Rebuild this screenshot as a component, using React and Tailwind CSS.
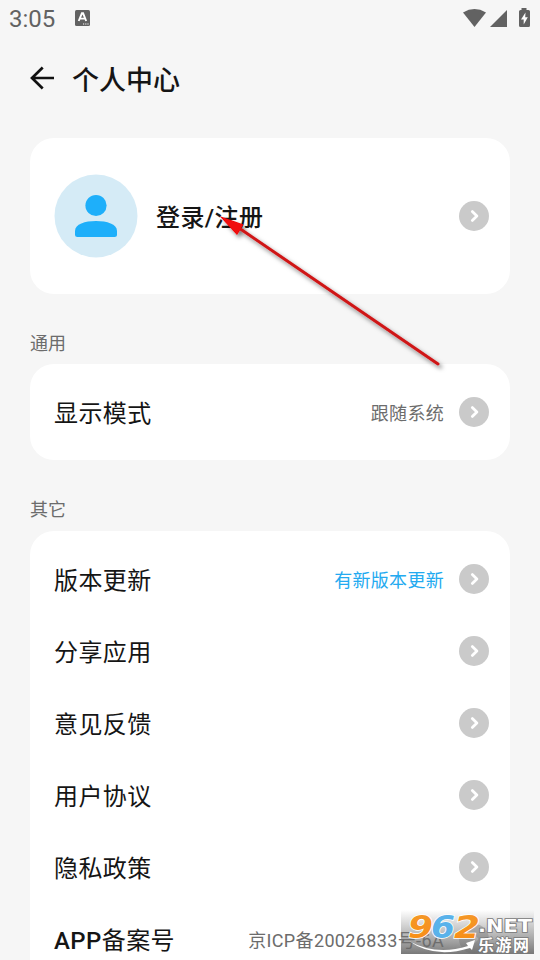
import React from "react";

function Chevron() {
  return (
    <svg className="size-[30px] shrink-0" viewBox="0 0 30 30">
      <circle cx="15" cy="15" r="15" fill="#cacaca" />
      <path d="M13.3 10.6L17.9 15L13.3 19.4" fill="none" stroke="#fff" strokeWidth="2.8" strokeLinecap="round" strokeLinejoin="round" />
    </svg>
  );
}

function Row({ label, value, accent, filing }) {
  return (
    <div className="flex h-[72px] items-center justify-between pl-6 pr-[21px]">
      <span className="pt-1 text-[24px] leading-9 tracking-[0.4px] text-[#151515]">
        {filing ? <><span className="font-medium">APP</span>{label.slice(3)}</> : label}
      </span>
      <div className="flex items-center gap-[15px]">
        {value && (
          <span className={"whitespace-nowrap pt-1 text-[18px] leading-7 " + (filing ? "tracking-[0.36px] " : "tracking-[0.3px] ") + (accent ? "text-[#23aaf0]" : "text-[#6c6c6c]")}>{value}</span>
        )}
        <Chevron />
      </div>
    </div>
  );
}

function StatusBar() {
  return (
    <header className="flex h-9 shrink-0 items-center justify-between px-[9px] text-[#626262]">
      <div className="flex items-center gap-5">
        <span className="pt-[2px] text-[24px] leading-8">3:05</span>
        <svg className="h-4 w-[15px]" viewBox="0 0 15 16">
          <rect width="15" height="16" rx="1.5" fill="#626262" />
          <path d="M3.7 11L6.9 3.3H8.1L11.2 11M5.2 8.6H9.7" fill="none" stroke="#fff" strokeWidth="1.9" />
          <path d="M8 14h1.2M10.2 14h1.2M12.4 14h1.2" stroke="#fff" strokeWidth="1.2" />
        </svg>
      </div>
      <svg className="h-5 w-[68px]" viewBox="463 8 68 20">
        <path d="M463 12.4Q474.5 5.6 486 12.4L474.5 27Z" fill="#626262" />
        <path d="M507 10V27H490Z" fill="#626262" />
        <path d="M521.5 8h5v2h2q1.5 0 1.5 1.5v14q0 1.5-1.5 1.5h-8q-1.5 0-1.5-1.5v-14q0-1.5 1.5-1.5h1z" fill="#626262" />
        <path d="M525.5 12.5L521 19.5H523.7V24.5L527.8 17.2H525.2Z" fill="#fff" />
      </svg>
    </header>
  );
}

function PointerArrow() {
  return (
    <svg className="pointer-events-none absolute left-0 top-0 h-[400px] w-[540px]" viewBox="0 0 540 400">
      <defs>
        <filter id="arrowShadow" x="-10%" y="-10%" width="125%" height="125%">
          <feDropShadow dx="2.5" dy="3" stdDeviation="2.2" floodColor="#000" floodOpacity="0.5" />
        </filter>
      </defs>
      <g filter="url(#arrowShadow)">
        <path d="M239 228L438 364" stroke="#cf1518" strokeWidth="3" strokeLinecap="round" />
        <path d="M219.5 216L243.5 224.5L237 235Z" fill="#f00707" />
      </g>
    </svg>
  );
}

function Watermark() {
  return (
    <svg className="absolute left-[400px] top-[905px] h-[55px] w-[140px]" viewBox="0 0 140 55">
      <defs>
        <linearGradient id="plate" x1="0" y1="0" x2="0" y2="1">
          <stop offset="0" stopColor="#777" stopOpacity="0" />
          <stop offset=".45" stopColor="#777" stopOpacity=".42" />
          <stop offset="1" stopColor="#666" stopOpacity=".88" />
        </linearGradient>
        <linearGradient id="orange" x1="0" y1="0" x2="0" y2="1">
          <stop offset="0" stopColor="#f39a2c" />
          <stop offset="1" stopColor="#f98c13" />
        </linearGradient>
      </defs>
      <rect x="1" y="5" width="133" height="44" fill="url(#plate)" />
      <path d="M9 36Q36 51 68 41L66 38L75 35L72 45L70 43Q34 54 9 36Z" fill="#fff" />
      <g fontFamily="DejaVu Sans" fontWeight="700" fontStyle="italic" fontSize="32" stroke="#fff" strokeWidth="1.6" paintOrder="stroke">
        <text x="8" y="32.5" textLength="25" lengthAdjust="spacingAndGlyphs" fill="url(#orange)">9</text>
        <text x="31" y="32.5" textLength="24" lengthAdjust="spacingAndGlyphs" fill="#59b2ea">6</text>
        <text x="54" y="32.5" textLength="26" lengthAdjust="spacingAndGlyphs" fill="url(#orange)">2</text>
      </g>
      <text x="78" y="27" textLength="54" lengthAdjust="spacingAndGlyphs" fontFamily="DejaVu Sans" fontWeight="700" fontSize="18" fill="#fff" stroke="#777" strokeWidth="1.6" paintOrder="stroke">.NET</text>
      <text x="78" y="45.5" textLength="51" fontFamily="Noto Sans CJK SC" fontWeight="700" fontSize="16" fill="#fff" stroke="#777" strokeWidth="1.5" paintOrder="stroke">乐游网</text>
    </svg>
  );
}

const links = ["分享应用", "意见反馈", "用户协议", "隐私政策"];

export default function App() {
  return (
    <div className="relative flex h-[960px] w-[540px] flex-col overflow-hidden bg-[#f6f6f6] font-['Roboto','Noto_Sans_CJK_SC',sans-serif] text-[#151515]">
      <StatusBar />
      <nav className="flex h-[102px] shrink-0 items-start gap-[18px] pl-[30px] pt-6">
        <svg className="mt-[6px] h-6 w-6" viewBox="0 0 24 24" fill="none" stroke="#111" strokeWidth="2.7">
          <path d="M12.7 1.5L2 12L12.7 22.5M2 12H24" />
        </svg>
        <h1 className="pt-px text-[27px] font-medium leading-10">个人中心</h1>
      </nav>
      <main className="px-[30px]">
        <section className="flex h-[156px] items-center rounded-[24px] bg-white pl-6 pr-[21px]">
          <svg className="size-[84px] shrink-0" viewBox="0 0 84 84">
            <circle cx="42" cy="42" r="41.5" fill="#d5ebf6" />
            <circle cx="42" cy="31.5" r="10.6" fill="#1eaffa" />
            <path d="M21 57C21 50 31 47 42 47S63 50 63 57V60.5Q63 63 60.5 63H23.5Q21 63 21 60.5Z" fill="#1eaffa" />
          </svg>
          <span className="ml-[18px] flex-1 pt-[3px] text-[24px] font-medium leading-9 tracking-[0.4px]">登录/注册</span>
          <Chevron />
        </section>
        <h2 className="mt-[36px] h-[34px] text-[18px] leading-7 text-[#6c6c6c]">通用</h2>
        <section className="rounded-[24px] bg-white py-3">
          <Row label="显示模式" value="跟随系统" />
        </section>
        <h2 className="mt-[36px] h-[35px] text-[18px] leading-7 text-[#6c6c6c]">其它</h2>
        <section className="rounded-t-[24px] bg-white py-3">
          <Row label="版本更新" value="有新版本更新" accent />
          {links.map((label) => <Row key={label} label={label} />)}
          <Row label="APP备案号" value="京ICP备20026833号-6A" filing />
        </section>
      </main>
      <PointerArrow />
      <Watermark />
    </div>
  );
}
